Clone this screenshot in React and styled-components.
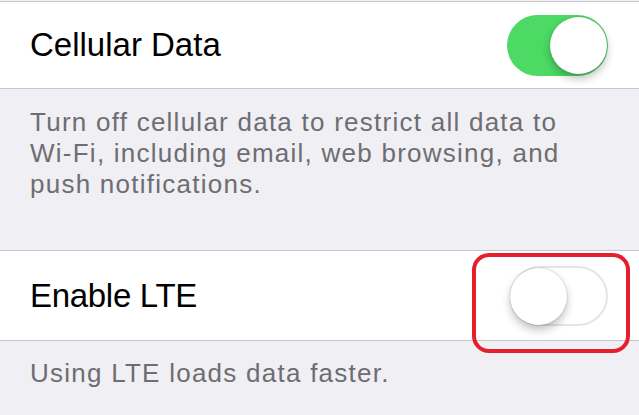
import React from "react";
import styled, { createGlobalStyle } from "styled-components";

const Global = createGlobalStyle`
  html, body { margin: 0; padding: 0; }
  body {
    background: #efeff4;
    font-family: "Liberation Sans", Arial, sans-serif;
    -webkit-font-smoothing: antialiased;
  }
`;

const Page = styled.div`
  width: 639px;
  height: 415px;
  overflow: hidden;
  background: #efeff4;
  padding-top: 1px;
  box-sizing: border-box;
`;

const Group = styled.div`
  background: #ffffff;
  border-top: 1px solid #c8c7cc;
  border-bottom: 1px solid #c8c7cc;
`;

const Row = styled.div`
  height: ${(p) => p.$h}px;
  display: flex;
  align-items: center;
  justify-content: space-between;
  padding: 0 31px 0 30px;
`;

const Label = styled.span`
  font-size: 33px;
  color: #000;
  letter-spacing: ${(p) => p.$ls || 0}px;
`;

const Footer = styled.div`
  padding: ${(p) => p.$pad};
  font-size: 26px;
  line-height: 31px;
  letter-spacing: 1.25px;
  color: #6d6d72;
`;

const NoWrap = styled.span`
  white-space: nowrap;
`;

const SwitchWrap = styled.div`
  position: relative;
  display: flex;
`;

const Track = styled.div`
  position: relative;
  box-sizing: border-box;
  width: ${(p) => (p.$on ? 101 : 98)}px;
  height: ${(p) => (p.$on ? 61 : 60)}px;
  border-radius: 31px;
  background: ${(p) => (p.$on ? "#4cd964" : "#ffffff")};
  border: ${(p) => (p.$on ? "none" : "2.5px solid #e5e5ea")};
`;

const Knob = styled.div`
  position: absolute;
  top: ${(p) => (p.$on ? 2 : 0)}px;
  ${(p) => (p.$on ? "right: 1px;" : "left: -2.5px;")}
  width: 57px;
  height: 57px;
  border-radius: 50%;
  background: #ffffff;
  box-shadow: 0 5px 8px rgba(0, 0, 0, 0.24), 0 0 1.5px rgba(0, 0, 0, 0.3);
`;

const Highlight = styled.div`
  position: absolute;
  left: -38px;
  top: -13px;
  width: 158px;
  height: 100px;
  box-sizing: border-box;
  border: 4.5px solid #e51f2b;
  border-radius: 17px;
  pointer-events: none;
`;

function Switch({ on, highlighted }) {
  return (
    <SwitchWrap>
      <Track $on={on}>
        <Knob $on={on} />
      </Track>
      {highlighted && <Highlight />}
    </SwitchWrap>
  );
}

export default function App() {
  return (
    <>
      <Global />
      <Page>
        <Group>
          <Row $h={86}>
            <Label>Cellular Data</Label>
            <Switch on />
          </Row>
        </Group>
        <Footer $pad="18px 64px 50px 30px">
          Turn off cellular data to restrict all data to <NoWrap>Wi-Fi,</NoWrap>{" "}
          including email, web browsing, and push notifications.
        </Footer>
        <Group>
          <Row $h={89}>
            <Label $ls={-0.3}>Enable LTE</Label>
            <Switch highlighted />
          </Row>
        </Group>
        <Footer $pad="17px 30px 0 30px">Using LTE loads data faster.</Footer>
      </Page>
    </>
  );
}
